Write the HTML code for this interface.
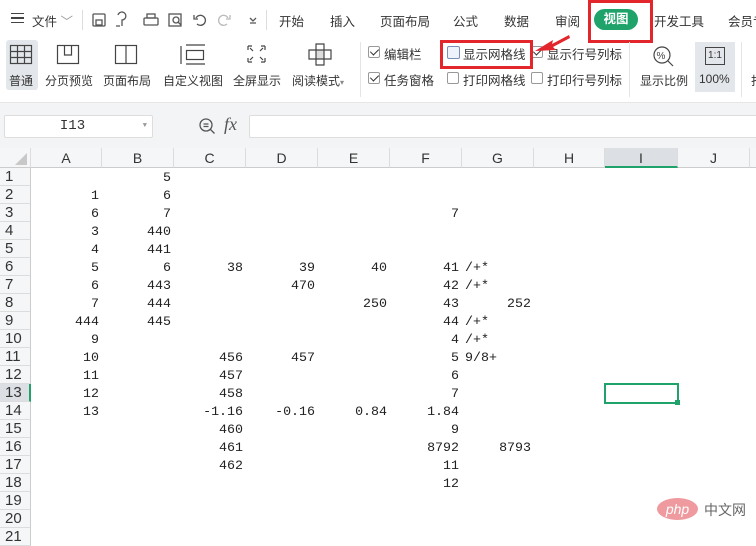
<!DOCTYPE html>
<html><head><meta charset="utf-8"><style>
*{margin:0;padding:0;box-sizing:border-box}
body{width:756px;height:540px;overflow:hidden;background:#fff;font-family:"Liberation Sans","Noto Sans CJK SC",sans-serif;font-size:12px;color:#333;position:relative}
.a{position:absolute;white-space:nowrap}
.tab{top:11px;font-size:12.5px;color:#333}
.lbl{top:72px;font-size:12px;color:#333}
.cb{position:absolute;width:12px;height:12px;border:1px solid #999;border-radius:2px;background:#fff}
.ck::after{content:"";position:absolute;left:3px;top:0px;width:4px;height:7px;border:solid #333;border-width:0 1.5px 1.5px 0;transform:rotate(45deg)}
.ch{position:absolute;top:148px;height:20px;font-size:14px;color:#333;text-align:center;line-height:20px;border-right:1px solid #dcdcdc;background:#f5f6f7;border-bottom:1px solid #ccc}
.rh{position:absolute;left:0;width:31px;height:18px;font-size:15px;line-height:18px;padding-left:5px;background:#f5f6f7;border-bottom:1px solid #dcdcdc;border-right:1px solid #ccc;color:#333}
.c{position:absolute;height:18px;line-height:20px;font-family:"Liberation Mono",monospace;font-size:13.3px;color:#222;text-align:right}
</style></head><body>
<div class="a" style="left:0;top:0;width:756px;height:38px;background:#fff"></div>
<div class="a" style="left:11px;top:13px;width:13px;height:10px;border-top:1.5px solid #444;border-bottom:1.5px solid #444"></div>
<div class="a" style="left:11px;top:17px;width:13px;height:1.5px;background:#444"></div>
<div class="a tab" style="left:32px">文件 <span style="color:#999">﹀</span></div>
<div class="a" style="left:82px;top:10px;width:1px;height:20px;background:#ddd"></div>
<svg class="a" style="left:90px;top:10px" width="170" height="20" fill="none" stroke="#555" stroke-width="1.3">
<rect x="3" y="4" width="12" height="12" rx="1"/><rect x="6" y="10" width="6" height="5"/>
<path d="M28 5a4 4 0 1 1 4 5v6M26 16h4"/>
<rect x="54" y="8" width="14" height="7" rx="1"/><rect x="57" y="4" width="8" height="4"/>
<rect x="79" y="4" width="12" height="12"/><circle cx="86" cy="10" r="3"/><path d="M88 12l3 3"/>
<path d="M106 8a5 5 0 1 1 1 6M104 5v4h4"/>
<path stroke="#bbb" d="M138 8a5 5 0 1 0-1 6M140 5v4h-4"/>
<path d="M160 8l3 3 3-3M160 13h6"/>
</svg>
<div class="a" style="left:266px;top:10px;width:1px;height:20px;background:#ddd"></div>
<div class="a tab" style="left:279px">开始</div>
<div class="a tab" style="left:330px">插入</div>
<div class="a tab" style="left:380px">页面布局</div>
<div class="a tab" style="left:453px">公式</div>
<div class="a tab" style="left:504px">数据</div>
<div class="a tab" style="left:555px">审阅</div>
<div class="a" style="left:594px;top:9px;width:44px;height:21px;border-radius:11px;background:#1fa36a;color:#fff;font-weight:bold;font-size:12.5px;text-align:center;line-height:21px">视图</div>
<div class="a tab" style="left:654px">开发工具</div>
<div class="a tab" style="left:728px">会员专</div>
<div class="a" style="left:588px;top:0;width:65px;height:43px;border:3px solid #e3262c"></div>
<div class="a" style="left:6px;top:40px;width:32px;height:50px;background:#e3e6ea;border-radius:3px"></div>
<svg class="a" style="left:0;top:40px" width="360" height="30" fill="none" stroke="#444" stroke-width="1.2">
<rect x="10.5" y="5.5" width="21" height="18"/><path d="M10 11.5h22M10 17.5h22M17.5 5v19M24.5 5v19"/>
<rect x="57.5" y="5.5" width="21" height="18"/><path d="M64.5 5v10h7V5"/>
<rect x="115.5" y="5.5" width="21" height="18"/><path d="M126 5v19"/>
<path d="M181 6v18M186 5h19M186 24h19"/><rect x="186.5" y="10.5" width="17" height="9"/>
<path d="M248 6h4M248 6v4M265 6h-4M265 6v4M248 22h4M248 22v-4M265 22h-4M265 22v-4M250 8l3 3M263 8l-3 3M250 20l3-3M263 20l-3-3"/>
<path d="M316 4h8v6h7v9h-7v6h-8v-6h-7v-9h7z"/><path d="M316 10h8v9h-8z" fill="#ddd"/>
</svg>
<div class="a lbl" style="left:9px">普通</div>
<div class="a lbl" style="left:45px">分页预览</div>
<div class="a lbl" style="left:103px">页面布局</div>
<div class="a lbl" style="left:163px">自定义视图</div>
<div class="a lbl" style="left:233px">全屏显示</div>
<div class="a lbl" style="left:292px">阅读模式<span style="font-size:8px;color:#888">▾</span></div>
<div class="a" style="left:360px;top:42px;width:1px;height:55px;background:#e5e5e5"></div>
<div class="cb ck" style="left:368px;top:46px"></div><div class="a" style="left:384px;top:44px;font-size:12.5px">编辑栏</div>
<div class="cb ck" style="left:368px;top:72px"></div><div class="a" style="left:384px;top:70px;font-size:12.5px">任务窗格</div>
<div class="cb" style="left:447px;top:46px;border-color:#7a8fb8;background:#eef2fa;width:13px;height:13px"></div><div class="a" style="left:463px;top:44px;font-size:12.5px">显示网格线</div>
<div class="cb" style="left:447px;top:72px"></div><div class="a" style="left:463px;top:70px;font-size:12.5px">打印网格线</div>
<div class="cb ck" style="left:531px;top:46px"></div><div class="a" style="left:547px;top:44px;font-size:12.5px">显示行号列标</div>
<div class="cb" style="left:531px;top:72px"></div><div class="a" style="left:547px;top:70px;font-size:12.5px">打印行号列标</div>
<div class="a" style="left:440px;top:40px;width:93px;height:29px;border:3px solid #e3262c"></div>
<svg class="a" style="left:0;top:0" width="756" height="100"><path d="M569 35L552 44L553 40L535 51L556 50L553 47L570 38z" fill="#e3262c"/></svg>
<div class="a" style="left:629px;top:42px;width:1px;height:55px;background:#e5e5e5"></div>
<svg class="a" style="left:650px;top:44px" width="30" height="26" fill="none" stroke="#444" stroke-width="1.2"><circle cx="12" cy="11" r="8"/><path d="M18 17l5 5"/><text x="6.5" y="15" font-size="10" fill="#444" stroke="none" font-family="Liberation Sans">%</text></svg>
<div class="a lbl" style="left:640px">显示比例</div>
<div class="a" style="left:695px;top:42px;width:40px;height:50px;background:#e3e6ea"></div>
<div class="a" style="left:705px;top:47px;width:20px;height:18px;border:1.2px solid #444;font-size:10px;text-align:center;line-height:16px">1:1</div>
<div class="a lbl" style="left:699px">100%</div>
<div class="a" style="left:741px;top:42px;width:1px;height:55px;background:#e5e5e5"></div>
<div class="a lbl" style="left:751px">打</div>
<div class="a" style="left:0;top:102px;width:756px;height:46px;background:#f3f4f6;border-top:1px solid #e6e6e6"></div>
<div class="a" style="left:4px;top:115px;width:149px;height:23px;background:#fff;border:1px solid #ddd;border-radius:2px;font-family:'Liberation Mono',monospace;font-size:14px;text-align:center;line-height:21px;padding-right:12px">I13<span style="position:absolute;right:5px;top:0;font-size:7px;color:#999">▼</span></div>
<svg class="a" style="left:198px;top:117px" width="20" height="20" fill="none" stroke="#555" stroke-width="1.3"><circle cx="8" cy="8" r="6"/><path d="M12.5 12.5l4 4M5.5 7h5M5.5 9.5h5"/></svg>
<div class="a" style="left:224px;top:114px;font-family:'Liberation Serif',serif;font-style:italic;font-size:18px;color:#555">fx</div>
<div class="a" style="left:249px;top:115px;width:520px;height:23px;background:#fff;border:1px solid #ddd;border-radius:2px"></div>
<div class="ch" style="left:0;width:31px"><svg width="14" height="14" style="position:absolute;left:14px;top:4px"><path d="M13 1V13H1z" fill="#c8c8c8"/></svg></div>
<div class="ch" style="left:31px;width:71px">A</div>
<div class="ch" style="left:102px;width:72px">B</div>
<div class="ch" style="left:174px;width:72px">C</div>
<div class="ch" style="left:246px;width:72px">D</div>
<div class="ch" style="left:318px;width:72px">E</div>
<div class="ch" style="left:390px;width:72px">F</div>
<div class="ch" style="left:462px;width:72px">G</div>
<div class="ch" style="left:534px;width:71px">H</div>
<div class="ch" style="left:605px;width:73px;background:#dcdfe3;border-bottom:2px solid #1fa36a">I</div>
<div class="ch" style="left:678px;width:72px">J</div>
<div class="ch" style="left:750px;width:10px"></div>
<div class="rh" style="top:168px">1</div><div class="rh" style="top:186px">2</div><div class="rh" style="top:204px">3</div><div class="rh" style="top:222px">4</div><div class="rh" style="top:240px">5</div><div class="rh" style="top:258px">6</div><div class="rh" style="top:276px">7</div><div class="rh" style="top:294px">8</div><div class="rh" style="top:312px">9</div><div class="rh" style="top:330px">10</div><div class="rh" style="top:348px">11</div><div class="rh" style="top:366px">12</div><div class="rh" style="top:384px;background:#dcdfe3;border-right:2px solid #1fa36a">13</div><div class="rh" style="top:402px">14</div><div class="rh" style="top:420px">15</div><div class="rh" style="top:438px">16</div><div class="rh" style="top:456px">17</div><div class="rh" style="top:474px">18</div><div class="rh" style="top:492px">19</div><div class="rh" style="top:510px">20</div><div class="rh" style="top:528px">21</div>
<div class="c" style="top:168px;right:585px">5</div>
<div class="c" style="top:186px;right:657px">1</div><div class="c" style="top:186px;right:585px">6</div>
<div class="c" style="top:204px;right:657px">6</div><div class="c" style="top:204px;right:585px">7</div><div class="c" style="top:204px;right:297px">7</div>
<div class="c" style="top:222px;right:657px">3</div><div class="c" style="top:222px;right:585px">440</div>
<div class="c" style="top:240px;right:657px">4</div><div class="c" style="top:240px;right:585px">441</div>
<div class="c" style="top:258px;right:657px">5</div><div class="c" style="top:258px;right:585px">6</div><div class="c" style="top:258px;right:513px">38</div><div class="c" style="top:258px;right:441px">39</div><div class="c" style="top:258px;right:369px">40</div><div class="c" style="top:258px;right:297px">41</div><div class="c" style="top:258px;left:465px">/+*</div>
<div class="c" style="top:276px;right:657px">6</div><div class="c" style="top:276px;right:585px">443</div><div class="c" style="top:276px;right:441px">470</div><div class="c" style="top:276px;right:297px">42</div><div class="c" style="top:276px;left:465px">/+*</div>
<div class="c" style="top:294px;right:657px">7</div><div class="c" style="top:294px;right:585px">444</div><div class="c" style="top:294px;right:369px">250</div><div class="c" style="top:294px;right:297px">43</div><div class="c" style="top:294px;right:225px">252</div>
<div class="c" style="top:312px;right:657px">444</div><div class="c" style="top:312px;right:585px">445</div><div class="c" style="top:312px;right:297px">44</div><div class="c" style="top:312px;left:465px">/+*</div>
<div class="c" style="top:330px;right:657px">9</div><div class="c" style="top:330px;right:297px">4</div><div class="c" style="top:330px;left:465px">/+*</div>
<div class="c" style="top:348px;right:657px">10</div><div class="c" style="top:348px;right:513px">456</div><div class="c" style="top:348px;right:441px">457</div><div class="c" style="top:348px;right:297px">5</div><div class="c" style="top:348px;left:465px">9/8+</div>
<div class="c" style="top:366px;right:657px">11</div><div class="c" style="top:366px;right:513px">457</div><div class="c" style="top:366px;right:297px">6</div>
<div class="c" style="top:384px;right:657px">12</div><div class="c" style="top:384px;right:513px">458</div><div class="c" style="top:384px;right:297px">7</div>
<div class="c" style="top:402px;right:657px">13</div><div class="c" style="top:402px;right:513px">-1.16</div><div class="c" style="top:402px;right:441px">-0.16</div><div class="c" style="top:402px;right:369px">0.84</div><div class="c" style="top:402px;right:297px">1.84</div>
<div class="c" style="top:420px;right:513px">460</div><div class="c" style="top:420px;right:297px">9</div>
<div class="c" style="top:438px;right:513px">461</div><div class="c" style="top:438px;right:297px">8792</div><div class="c" style="top:438px;right:225px">8793</div>
<div class="c" style="top:456px;right:513px">462</div><div class="c" style="top:456px;right:297px">11</div>
<div class="c" style="top:474px;right:297px">12</div>
<div class="a" style="left:604px;top:383px;width:75px;height:21px;border:2px solid #1fa36a"></div>
<div class="a" style="left:675px;top:400px;width:5px;height:5px;background:#1fa36a"></div>
<div class="a" style="left:657px;top:498px;width:41px;height:22px;border-radius:50%;background:#ef9a9e;color:#fff;font-style:italic;font-size:14px;text-align:center;line-height:22px">php</div>
<div class="a" style="left:704px;top:500px;font-size:14px;color:#666">中文网</div>
</body></html>
